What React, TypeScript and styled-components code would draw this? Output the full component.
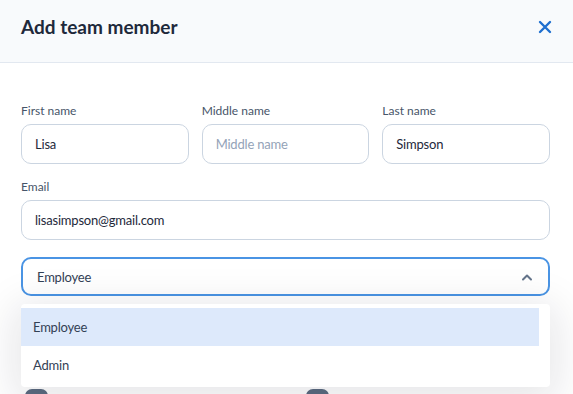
import React from 'react'
import styled, { createGlobalStyle } from 'styled-components'

const GlobalStyle = createGlobalStyle`
  html, body {
    margin: 0;
    padding: 0;
    background: #ffffff;
    overflow: hidden;
  }
  body {
    font-family: Lato, 'Open Sans', sans-serif;
    color: #1e293b;
  }
`

const Modal = styled.div`
  width: 573px;
  height: 394px;
  background: #ffffff;
  overflow: hidden;
`

const Header = styled.header`
  height: 63px;
  box-sizing: border-box;
  display: flex;
  align-items: center;
  justify-content: space-between;
  padding: 0 21px;
  background: #f8fafc;
  border-bottom: 1px solid #e2e8f0;
`

const Title = styled.h2`
  margin: 0 0 10px;
  font-size: 19px;
  font-weight: 700;
  color: #1e293b;
`

const CloseButton = styled.button`
  display: flex;
  align-items: center;
  justify-content: center;
  border: none;
  background: none;
  padding: 0;
  margin: 0 0 9px;
  cursor: pointer;
`

const Body = styled.div`
  padding: 40px 23px 0 21px;
  display: flex;
  flex-direction: column;
  gap: 15px;
`

const Row = styled.div<{ cols: number }>`
  display: grid;
  grid-template-columns: repeat(${(p) => p.cols}, 1fr);
  gap: 13px;
`

const Field = styled.label`
  display: flex;
  flex-direction: column;
  gap: 6px;
`

const Label = styled.span`
  font-size: 12px;
  color: #475569;
  line-height: 15px;
`

const Input = styled.input`
  box-sizing: border-box;
  width: 100%;
  height: 40px;
  padding: 0 13px;
  border: 1px solid #cbd5e1;
  border-radius: 10px;
  font-family: inherit;
  font-size: 13px;
  letter-spacing: -0.2px;
  color: #1e293b;
  outline: none;
  &::placeholder {
    color: #94a3b8;
  }
`

const SelectWrap = styled.div`
  position: relative;
  margin-top: 2px;
`

const SelectBox = styled.div`
  box-sizing: border-box;
  height: 39px;
  display: flex;
  align-items: center;
  justify-content: space-between;
  padding: 0 15px 0 14px;
  border: 2px solid #4a94e4;
  border-radius: 10px;
  font-size: 13px;
  letter-spacing: -0.2px;
  color: #334155;
`

const Menu = styled.ul`
  position: absolute;
  top: 47px;
  left: 0;
  right: 0;
  margin: 0;
  padding: 4px 11px 3px 0;
  list-style: none;
  background: #ffffff;
  border-radius: 4px;
  box-shadow: 0 8px 40px 8px rgba(15, 23, 42, 0.1);
  z-index: 2;
`

const Option = styled.li<{ active?: boolean }>`
  height: 38px;
  display: flex;
  align-items: center;
  padding: 0 12px;
  font-size: 13px;
  letter-spacing: -0.2px;
  color: #334155;
  background: ${(p) => (p.active ? '#dde9fb' : 'transparent')};
`

const Toggles = styled.div`
  display: grid;
  grid-template-columns: 281px 1fr;
  padding: 93px 4px 0;
`

const Toggle = styled.span`
  width: 23px;
  height: 14px;
  border-radius: 7px;
  background: #5b6b80;
`

const ChevronUp = () => (
  <svg width="12" height="8" viewBox="0 0 12 8" fill="none">
    <path d="M2 6.5 L6 2.5 L10 6.5" stroke="#64748b" strokeWidth="2" strokeLinecap="round" strokeLinejoin="round" />
  </svg>
)

const CloseIcon = () => (
  <svg width="14" height="14" viewBox="0 0 14 14" fill="none">
    <path d="M2 2 L12 12 M12 2 L2 12" stroke="#1f6fcf" strokeWidth="2.4" strokeLinecap="round" />
  </svg>
)

export default function App() {
  return (
    <Modal>
      <GlobalStyle />
      <Header>
        <Title>Add team member</Title>
        <CloseButton aria-label="Close">
          <CloseIcon />
        </CloseButton>
      </Header>
      <Body>
        <Row cols={3}>
          <Field>
            <Label>First name</Label>
            <Input defaultValue="Lisa" />
          </Field>
          <Field>
            <Label>Middle name</Label>
            <Input placeholder="Middle name" />
          </Field>
          <Field>
            <Label>Last name</Label>
            <Input defaultValue="Simpson" />
          </Field>
        </Row>
        <Row cols={1}>
          <Field>
            <Label>Email</Label>
            <Input defaultValue="lisasimpson@gmail.com" />
          </Field>
        </Row>
        <SelectWrap>
          <SelectBox>
            <span>Employee</span>
            <ChevronUp />
          </SelectBox>
          <Menu>
            <Option active>Employee</Option>
            <Option>Admin</Option>
          </Menu>
          <Toggles>
            <Toggle />
            <Toggle />
          </Toggles>
        </SelectWrap>
      </Body>
    </Modal>
  )
}
